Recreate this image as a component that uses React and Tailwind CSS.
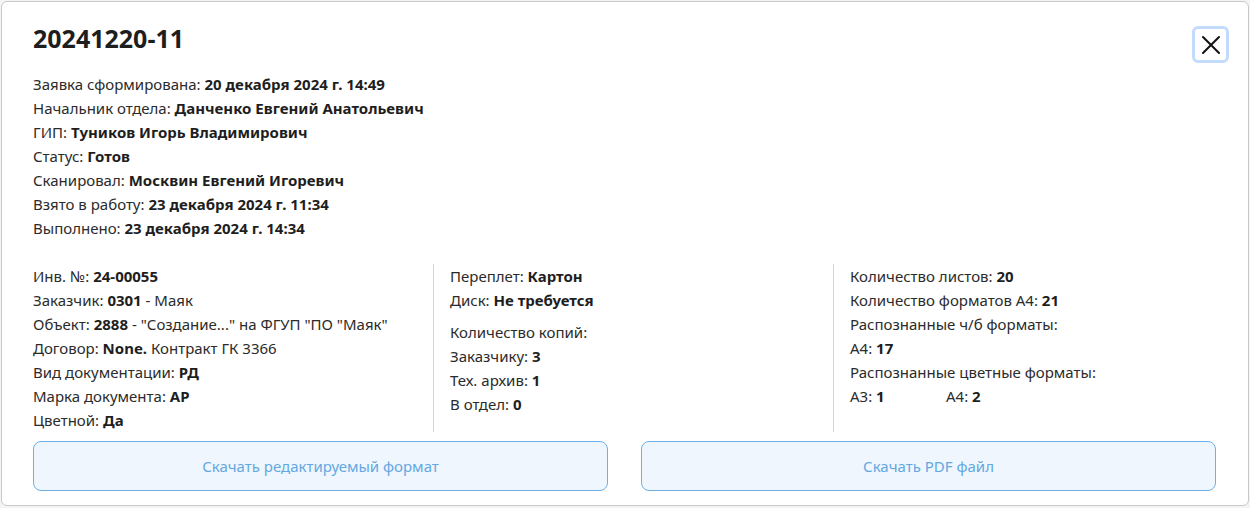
import React from 'react';

const mainInfo = [
    ['Заявка сформирована:', '20 декабря 2024 г. 14:49'],
    ['Начальник отдела:', 'Данченко Евгений Анатольевич'],
    ['ГИП:', 'Туников Игорь Владимирович'],
    ['Статус:', 'Готов'],
    ['Сканировал:', 'Москвин Евгений Игоревич'],
    ['Взято в работу:', '23 декабря 2024 г. 11:34'],
    ['Выполнено:', '23 декабря 2024 г. 14:34'],
];

function Row({ label, value, rest }) {
    return (
        <div className="h-6 leading-6 whitespace-nowrap">
            {label} <b className="font-bold text-[#1e1e1e]">{value}</b>
            {rest}
        </div>
    );
}

export default function App() {
    return (
        <div
            className="w-[1250px] h-[508px] bg-[#f4f4f4] overflow-hidden text-[15px] text-[#2b2b2b]"
            style={{ fontFamily: '"Noto Sans", "Open Sans", sans-serif' }}
        >
            <div className="m-px h-[505px] w-[1248px] bg-white border border-[#c9c9c9] rounded-md pl-[31px] pr-8 pt-5 flex flex-col">
                {/* header */}
                <div className="flex items-start justify-between">
                    <h2 className="text-[25px] font-bold text-[#1e1e1e] leading-9 -mt-[2px]">20241220-11</h2>
                    <button className="shrink-0 w-[37px] h-[37px] mt-[4px] -mr-[13px] flex items-center justify-center rounded-md border-[3px] border-[#c3dcfb] bg-white">
                        <svg width="20" height="20" viewBox="0 0 20 20" fill="none" stroke="#111" strokeWidth="2" strokeLinecap="round">
                            <path d="M2 2L18 18M18 2L2 18" />
                        </svg>
                    </button>
                </div>

                {/* main info */}
                <div className="mt-[9px]">
                    {mainInfo.map(([l, v]) => (
                        <Row key={l} label={l} value={v} />
                    ))}
                </div>

                {/* columns */}
                <div className="mt-[24px] grid grid-cols-[400px_400px_1fr]">
                    <div>
                        <Row label="Инв. №:" value="24-00055" />
                        <Row label="Заказчик:" value="0301" rest={<span> - Маяк</span>} />
                        <Row label="Объект:" value="2888" rest={<span> - "Создание..." на ФГУП "ПО "Маяк"</span>} />
                        <Row label="Договор:" value="None." rest={<span> Контракт ГК 3366</span>} />
                        <Row label="Вид документации:" value="РД" />
                        <Row label="Марка документа:" value="АР" />
                        <Row label="Цветной:" value="Да" />
                    </div>
                    <div className="border-l border-[#d4d4d4] pl-4 h-[168px]">
                        <Row label="Переплет:" value="Картон" />
                        <Row label="Диск:" value="Не требуется" />
                        <div className="h-2" />
                        <Row label="Количество копий:" value="" />
                        <Row label="Заказчику:" value="3" />
                        <Row label="Тех. архив:" value="1" />
                        <Row label="В отдел:" value="0" />
                    </div>
                    <div className="border-l border-[#d4d4d4] pl-4 h-[168px]">
                        <Row label="Количество листов:" value="20" />
                        <Row label="Количество форматов А4:" value="21" />
                        <Row label="Распознанные ч/б форматы:" value="" />
                        <Row label="А4:" value="17" />
                        <Row label="Распознанные цветные форматы:" value="" />
                        <div className="flex">
                            <div className="w-[96px]">
                                <Row label="А3:" value="1" />
                            </div>
                            <Row label="А4:" value="2" />
                        </div>
                    </div>
                </div>

                {/* buttons */}
                <div className="mt-[9px] grid grid-cols-2 gap-[33px]">
                    <button className="h-[50px] rounded-lg border border-[#6fb0e6] bg-[#eff6fd] text-[#64a8e2] text-[15px]">
                        Скачать редактируемый формат
                    </button>
                    <button className="h-[50px] rounded-lg border border-[#6fb0e6] bg-[#eff6fd] text-[#64a8e2] text-[15px]">
                        Скачать PDF файл
                    </button>
                </div>
            </div>
        </div>
    );
}
